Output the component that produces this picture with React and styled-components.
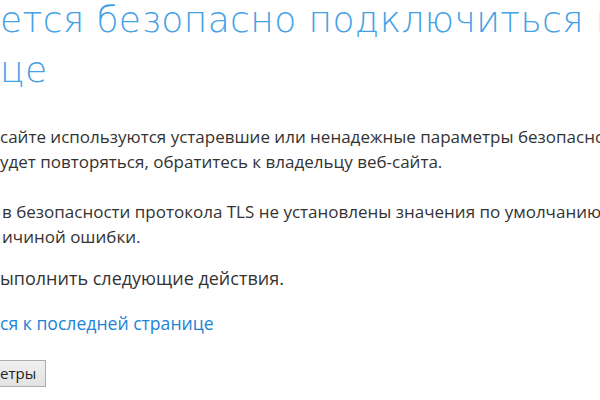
import React from "react";
import styled, { createGlobalStyle } from "styled-components";

const Global = createGlobalStyle`
  html, body { margin: 0; padding: 0; background: #ffffff; }
  body { overflow: hidden; }
`;

const Page = styled.main`
  width: 600px;
  height: 400px;
  overflow: hidden;
  font-family: "Segoe UI", "Open Sans", "Noto Sans", sans-serif;
  color: #333333;
`;

const Title = styled.h1`
  margin: -5px 0 0 0;
  font-family: "DejaVu Sans", "Open Sans", sans-serif;
  font-size: 36px;
  font-weight: 200;
  letter-spacing: 0.4px;
  line-height: 50px;
  color: #45a1e6;
  white-space: nowrap;
`;

const Line = styled.span`
  display: block;
  white-space: nowrap;
  padding-left: ${(p) => p.$indent || 0}px;
`;

const Para = styled.p`
  margin: ${(p) => p.$top || 0}px 0 0 0;
  font-size: ${(p) => p.$size || 17}px;
  line-height: 25px;
  white-space: nowrap;
`;

const Link = styled.a`
  display: block;
  margin-top: 20px;
  font-size: 17.6px;
  line-height: 25px;
  color: #1c83d6;
  text-decoration: none;
  white-space: nowrap;
`;

const Button = styled.button`
  display: block;
  box-sizing: border-box;
  margin-top: 24px;
  height: 27px;
  width: 46px;
  padding: 0 0 1px 0;
  text-align: left;
  font-family: "Segoe UI", "Open Sans", "Noto Sans", sans-serif;
  font-size: 15px;
  color: #222;
  background: linear-gradient(#f0f0f0, #e3e3e3);
  border: 1px solid #adadad;
  border-left: none;
  border-radius: 0;
`;

export default function App() {
  return (
    <>
      <Global />
      <Page>
        <Title>
          <Line>ется безопасно подключиться к этой</Line>
          <Line>це</Line>
        </Title>
        <Para $top={29}>
          <Line>сайте используются устаревшие или ненадежные параметры безопасности</Line>
          <Line>удет повторяться, обратитесь к владельцу веб-сайта.</Line>
        </Para>
        <Para $top={25}>
          <Line $indent={2}>в безопасности протокола TLS не установлены значения по умолчанию</Line>
          <Line $indent={2}>ичиной ошибки.</Line>
        </Para>
        <Para $top={17} $size={18}>
          <Line>ыполнить следующие действия.</Line>
        </Para>
        <Link href="#">ся к последней странице</Link>
        <Button type="button">етры</Button>
      </Page>
    </>
  );
}
